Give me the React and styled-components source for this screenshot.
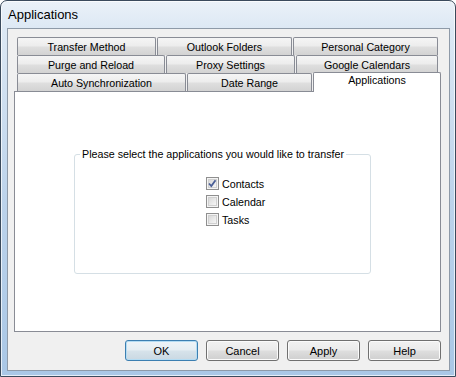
import React, { useState } from "react";
import styled, { createGlobalStyle } from "styled-components";

const GlobalStyle = createGlobalStyle`
  html, body {
    margin: 0;
    padding: 0;
    background: #ffffff;
  }
  body {
    font-family: "Liberation Sans", Arial, sans-serif;
    font-size: 10.7px;
    color: #000;
  }
`;

const Window = styled.div`
  box-sizing: border-box;
  width: 456px;
  height: 377px;
  border: 1px solid #3a4a5c;
  border-radius: 7px 7px 0 0;
  background: linear-gradient(to bottom, #eaf1f8 0px, #dce8f4 28px, #bcd3eb 200px, #a9c7e6 377px);
  box-shadow: inset 0 0 0 1px rgba(255, 255, 255, 0.7);
  display: flex;
  flex-direction: column;
`;

const TitleBar = styled.div`
  height: 27px;
  display: flex;
  align-items: center;
  padding-left: 7px;
  font-size: 13px;
  color: #000;
`;

const Client = styled.div`
  box-sizing: border-box;
  margin: 0 5px 0 6px;
  height: 343px;
  border: 1px solid #8e9aa8;
  background: #f0f0f0;
  padding: 8px 8px 9px 6px;
  display: flex;
  flex-direction: column;
`;

const TabStrip = styled.div`
  display: flex;
  flex-direction: column;
  padding-left: 3px;
`;

const TabRow = styled.div`
  display: flex;
  gap: 1px;
  height: 18px;
  align-items: flex-end;
`;

const Tab = styled.div`
  box-sizing: border-box;
  width: ${(p) => p.$w}px;
  height: ${(p) => (p.$active ? 20 : 18)}px;
  margin-bottom: ${(p) => (p.$active ? -1 : 0)}px;
  border: 1px solid #898c95;
  border-bottom: none;
  border-radius: 2px 2px 0 0;
  background: ${(p) =>
    p.$active
      ? "#ffffff"
      : "linear-gradient(to bottom, #f5f5f5 0%, #ededed 45%, #dedede 55%, #d3d3d3 100%)"};
  display: flex;
  justify-content: center;
  align-items: ${(p) => (p.$active ? "flex-start" : "center")};
  padding-top: ${(p) => (p.$active ? 1 : 0)}px;
  position: relative;
  z-index: ${(p) => (p.$active ? 1 : 0)};
  cursor: default;
  white-space: nowrap;
`;

const Panel = styled.div`
  box-sizing: border-box;
  height: 241px;
  width: 427px;
  border: 1px solid #898c95;
  background: #ffffff;
  padding-top: 56px;
  padding-left: 59px;
`;

const Group = styled.fieldset`
  box-sizing: border-box;
  margin: 0;
  width: 297px;
  height: 126px;
  border: 1px solid #d5dfe5;
  border-radius: 3px;
  padding: 0;

  legend {
    padding: 0 2px;
    margin-left: 5px;
    line-height: 13px;
    white-space: nowrap;
  }
`;

const CheckList = styled.div`
  display: flex;
  flex-direction: column;
  gap: 5px;
  margin: 16px 0 0 131px;
`;

const CheckRow = styled.label`
  display: flex;
  align-items: center;
  gap: 3px;
  height: 13px;
  cursor: default;
`;

const Box = styled.span`
  box-sizing: border-box;
  width: 13px;
  height: 13px;
  border: 1px solid #8f8f8f;
  background: #f4f4f4;
  display: flex;
  align-items: center;
  justify-content: center;

  span {
    box-sizing: border-box;
    width: 9px;
    height: 9px;
    border: 1px solid #d0d0d0;
    background: linear-gradient(135deg, #d9d9d9, #f6f6f6);
    display: flex;
    align-items: center;
    justify-content: center;
    overflow: visible;
  }
`;

const ButtonBar = styled.div`
  display: flex;
  justify-content: flex-end;
  gap: 8px;
  margin-top: 8px;
`;

const Button = styled.button`
  box-sizing: border-box;
  width: 73px;
  height: 21px;
  padding: 0;
  font-family: "Liberation Sans", Arial, sans-serif;
  font-size: 11px;
  color: #000;
  border: 1px solid ${(p) => (p.$default ? "#3c7fb1" : "#707070")};
  border-radius: 3px;
  background: ${(p) =>
    p.$default
      ? "linear-gradient(to bottom, #eef4f8 0%, #e6eef3 45%, #d6e2ea 55%, #cad8e2 100%)"
      : "linear-gradient(to bottom, #f2f2f2 0%, #ebebeb 45%, #dddddd 55%, #cfcfcf 100%)"};
  box-shadow: inset 0 0 0 1px ${(p) => (p.$default ? "#b4dcf3" : "#fbfbfb")};
  cursor: default;
`;

const tabRows = [
  [
    { label: "Transfer Method", w: 139 },
    { label: "Outlook Folders", w: 135 },
    { label: "Personal Category", w: 145 },
  ],
  [
    { label: "Purge and Reload", w: 148 },
    { label: "Proxy Settings", w: 129 },
    { label: "Google Calendars", w: 142 },
  ],
  [
    { label: "Auto Synchronization", w: 169 },
    { label: "Date Range", w: 125 },
    { label: "Applications", w: 128, active: true },
  ],
];

const Check = ({ checked }) => (
  <Box>
    <span>
      {checked && (
        <svg width="9" height="9" viewBox="0 0 9 9" style={{ overflow: "visible" }}>
          <path d="M1 4.5 L3.3 7 L7.5 1.2" fill="none" stroke="#4a5f97" strokeWidth="1.8" />
        </svg>
      )}
    </span>
  </Box>
);

const App = () => {
  const [apps, setApps] = useState({ Contacts: true, Calendar: false, Tasks: false });

  return (
    <>
      <GlobalStyle />
      <Window>
        <TitleBar>Applications</TitleBar>
        <Client>
          <TabStrip>
            {tabRows.map((row, i) => (
              <TabRow key={i}>
                {row.map((t) => (
                  <Tab key={t.label} $w={t.w} $active={t.active}>
                    {t.label}
                  </Tab>
                ))}
              </TabRow>
            ))}
          </TabStrip>
          <Panel>
            <Group>
              <legend>Please select the applications you would like to transfer</legend>
              <CheckList>
                {Object.keys(apps).map((name) => (
                  <CheckRow
                    key={name}
                    onClick={() => setApps({ ...apps, [name]: !apps[name] })}
                  >
                    <Check checked={apps[name]} />
                    {name}
                  </CheckRow>
                ))}
              </CheckList>
            </Group>
          </Panel>
          <ButtonBar>
            <Button $default>OK</Button>
            <Button>Cancel</Button>
            <Button>Apply</Button>
            <Button>Help</Button>
          </ButtonBar>
        </Client>
      </Window>
    </>
  );
};

export default App;
